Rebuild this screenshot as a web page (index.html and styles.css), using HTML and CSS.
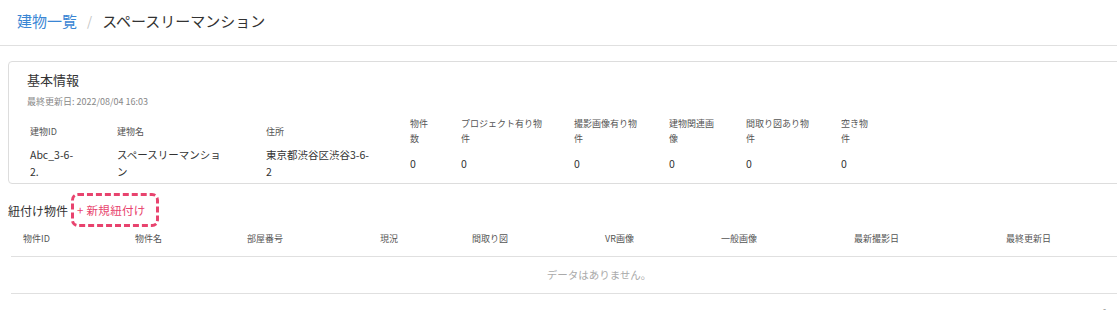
FILE: index.html
```html
<!DOCTYPE html>
<html lang="ja">

<head>
    <meta charset="UTF-8">
    <meta name="viewport" content="width=device-width, initial-scale=1.0">
    <title>スペースリーマンション</title>
    <link rel="stylesheet" href="styles.css">
</head>

<body>
    <header class="page-header">
        <nav class="breadcrumb">
            <a href="#" class="crumb-link">建物一覧</a>
            <span class="crumb-sep">/</span>
            <span class="crumb-current">スペースリーマンション</span>
        </nav>
    </header>

    <main class="content">
        <section class="info-card">
            <h2 class="card-title">基本情報</h2>
            <p class="updated">最終更新日: 2022/08/04 16:03</p>
            <table class="info-table">
                <thead>
                    <tr>
                        <th>建物ID</th>
                        <th>建物名</th>
                        <th>住所</th>
                        <th>物件数</th>
                        <th>プロジェクト有り物件</th>
                        <th>撮影画像有り物件</th>
                        <th>建物関連画像</th>
                        <th>間取り図あり物件</th>
                        <th>空き物件</th>
                    </tr>
                </thead>
                <tbody>
                    <tr>
                        <td>Abc_3-6-2.</td>
                        <td>スペースリーマンション</td>
                        <td>東京都渋谷区渋谷3-6-2</td>
                        <td>0</td>
                        <td>0</td>
                        <td>0</td>
                        <td>0</td>
                        <td>0</td>
                        <td>0</td>
                    </tr>
                </tbody>
            </table>
        </section>

        <div class="linked-head">
            <h3 class="linked-title">紐付け物件</h3>
            <button type="button" class="btn-add">+ 新規紐付け</button>
        </div>

        <div class="list">
            <div class="list-head">
                <span>物件ID</span>
                <span>物件名</span>
                <span>部屋番号</span>
                <span>現況</span>
                <span>間取り図</span>
                <span>VR画像</span>
                <span>一般画像</span>
                <span>最新撮影日</span>
                <span>最終更新日</span>
            </div>
            <div class="list-empty">データはありません。</div>
        </div>

        <div class="pager">-</div>
    </main>
</body>

</html>
```

FILE: styles.css
```css
/* General */
body {
    margin: 0;
    font-family: "Noto Sans CJK JP", "Noto Sans", sans-serif;
    background-color: #FFFFFF;
    color: #333333;
    overflow: hidden;
}

/* Header / breadcrumb */
.page-header {
    height: 45px;
    border-bottom: 1px solid #E0E0E0;
    padding-left: 17px;
    display: flex;
    align-items: center;
}

.breadcrumb {
    font-size: 15px;
    line-height: 20px;
    display: flex;
    align-items: center;
    margin-top: -4px;
}

.crumb-link {
    color: #3A86D4;
    text-decoration: none;
}

.crumb-sep {
    color: #C4C4C4;
    margin: 0 10px 0 10px;
    font-size: 13px;
}

.crumb-current {
    color: #333333;
}

/* Main */
.content {
    padding: 15px 8px 0 8px;
}

/* Basic info card */
.info-card {
    border: 1px solid #DDDDDD;
    border-radius: 4px;
    margin-right: -30px;
    padding: 9px 18px 3px 18px;
}

.card-title {
    margin: 0;
    font-size: 13px;
    line-height: 18px;
    font-weight: normal;
    color: #333333;
}

.updated {
    margin: 6px 0 0 0;
    font-size: 9px;
    line-height: 14px;
    color: #888888;
}

.info-table {
    border-collapse: collapse;
    table-layout: fixed;
    width: 846px;
    margin-top: 7px;
}

.info-table th,
.info-table td {
    text-align: left;
    vertical-align: middle;
    padding: 0 0 0 3px;
    overflow-wrap: break-word;
}

.info-table th {
    font-size: 9px;
    line-height: 15px;
    font-weight: normal;
    color: #555555;
}

.info-table td {
    font-size: 10.5px;
    line-height: 17px;
    color: #333333;
}

/* column widths: text width + trailing gap */
.info-table tr > :nth-child(1) { width: 46px; padding-right: 38px; }
.info-table tr > :nth-child(2) { width: 108px; padding-right: 38px; }
.info-table tr > :nth-child(3) { width: 107px; padding-right: 34px; }
.info-table tr > :nth-child(4) { width: 22px; padding-right: 26px; }
.info-table tr > :nth-child(5) { width: 85px; padding-right: 25px; }
.info-table tr > :nth-child(6) { width: 68px; padding-right: 24px; }
.info-table tr > :nth-child(7) { width: 50px; padding-right: 24px; }
.info-table tr > :nth-child(8) { width: 68px; padding-right: 24px; }
.info-table tr > :nth-child(9) { width: 32px; }

/* Linked properties */
.linked-head {
    display: flex;
    align-items: center;
    margin-top: 9px;
}

.linked-title {
    margin: 0 3px 0 0;
    font-size: 12px;
    font-weight: normal;
    color: #333333;
}

.btn-add {
    font-family: inherit;
    font-size: 11.5px;
    line-height: 16px;
    letter-spacing: 0.3px;
    color: #E8436E;
    background: transparent;
    border: 3px dashed #E8436E;
    border-radius: 7px;
    height: 34px;
    padding: 0 10px 0 3px;
    cursor: pointer;
}

.list {
    margin: 0 -30px 0 3px;
}

.list-head {
    display: grid;
    grid-template-columns: 112px 112px 133px 92px 133px 116px 133px 152px 1fr;
    padding: 4px 0 9px 12px;
    font-size: 9px;
    line-height: 16px;
    color: #555555;
    border-bottom: 1px solid #E0E0E0;
}

.list-empty {
    height: 36px;
    line-height: 36px;
    text-align: center;
    padding-left: 48px;
    font-size: 10.5px;
    color: #AAAAAA;
    border-bottom: 1px solid #E0E0E0;
}

.pager {
    text-align: right;
    padding: 2px 3px 0 0;
    font-size: 9px;
    line-height: 26px;
    color: #888888;
}
```
